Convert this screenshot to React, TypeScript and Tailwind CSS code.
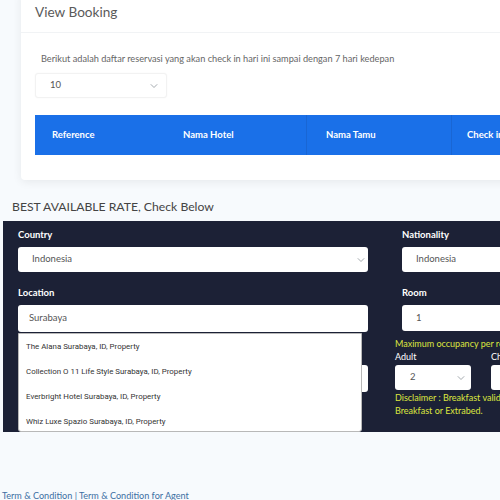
import React from "react";

function Chevron({ className = "" }: { className?: string }) {
  return (
    <svg width="8" height="5" viewBox="0 0 8 5" className={className} fill="none">
      <path d="M0.8 0.8 L4 4 L7.2 0.8" stroke="#9aa0a6" strokeWidth="0.9" />
    </svg>
  );
}

function Select({ value, className = "", pad = "pl-[14px]", chev = "right-[6px]" }: { value: string; className?: string; pad?: string; chev?: string }) {
  return (
    <div className={`relative flex items-center bg-white rounded-[3px] ${pad} ${className}`}>
      <span className="text-[9.5px] text-[#555]">{value}</span>
      <Chevron className={`absolute ${chev} top-1/2 -translate-y-1/2`} />
    </div>
  );
}

const hotels = [
  "The Alana Surabaya, ID, Property",
  "Collection O 11 Life Style Surabaya, ID, Property",
  "Everbright Hotel Surabaya, ID, Property",
  "Whiz Luxe Spazio Surabaya, ID, Property",
];

export default function App() {
  return (
    <div className="w-[500px] h-[500px] overflow-hidden bg-[#f7fafd] font-['Lato',sans-serif]">
      <div className="w-[720px]">
        {/* booking card */}
        <div className="ml-[21px] -mt-[10px] bg-white rounded-[4px] shadow-[0_2px_10px_rgba(0,0,0,0.07)]">
          <div className="h-[43px] flex items-center px-[14px] border-b border-[#f1f3f5]">
            <span className="text-[13.6px] text-[#5a5a5a] pt-[2px]">View Booking</span>
          </div>
          <div className="px-[14px] pt-[20px] pb-[25px]">
            <p className="ml-[6px] text-[9.2px] leading-[12px] text-[#666]">
              Berikut adalah daftar reservasi yang akan check in hari ini sampai dengan 7 hari kedepan
            </p>
            <div className="mt-[8px] w-[132px] h-[25px] relative flex items-center pl-[14px] bg-white rounded-[3px] border border-[#f2f2f2] shadow-[0_0_2px_rgba(0,0,0,0.04)]">
              <span className="text-[9.5px] text-[#555]">10</span>
              <Chevron className="absolute right-[8px] top-1/2 -translate-y-1/2" />
            </div>
            <div className="mt-[17px] h-[40px] bg-[#1a70e8] flex text-white font-bold text-[9.5px]">
              <div className="w-[128px] shrink-0 pl-[17px] flex items-center">Reference</div>
              <div className="w-[144px] shrink-0 pl-[20px] flex items-center border-r border-[#1966d4]">Nama Hotel</div>
              <div className="w-[145px] shrink-0 pl-[19px] flex items-center border-r border-[#1966d4]">Nama Tamu</div>
              <div className="w-[140px] shrink-0 pl-[15px] flex items-center">Check in</div>
            </div>
          </div>
        </div>

        {/* rate search */}
        <h2 className="mt-[19px] ml-[12px] text-[12.2px] leading-[16px] text-[#444]">BEST AVAILABLE RATE, Check Below</h2>
        <div className="mt-[6px] ml-[3px] h-[211px] bg-[#1c2136] flex pl-[15px]">
          {/* left column */}
          <div className="w-[350px] shrink-0 relative">
            <div className="pt-[8px] text-white font-bold text-[9.5px] leading-[12px]">Country</div>
            <Select value="Indonesia" className="mt-[6px] h-[25px]" chev="right-[3px]" />
            <div className="mt-[15px] text-white font-bold text-[9.5px] leading-[12px]">Location</div>
            <div className="mt-[6px] h-[27px] bg-white rounded-[3px] flex items-center pl-[11px]">
              <span className="text-[9.5px] text-[#555]">Surabaya</span>
            </div>
            <div className="mt-[33px] h-[27px] bg-white rounded-[3px]" />

            {/* autocomplete menu */}
            <div className="absolute left-0 top-[112px] w-[344px] h-[99px] bg-white border border-[#b8b8b8] rounded-b-[3px] font-['Roboto',sans-serif] text-[7.9px] text-[#333]">
              {hotels.map((h) => (
                <div key={h} className="h-[25px] flex items-center pl-[7px]">{h}</div>
              ))}
            </div>
          </div>

          {/* right column */}
          <div className="ml-[34px] w-[300px] shrink-0">
            <div className="pt-[8px] text-white font-bold text-[9.5px] leading-[12px]">Nationality</div>
            <Select value="Indonesia" className="mt-[6px] h-[25px]" />
            <div className="mt-[15px] text-white font-bold text-[9.5px] leading-[12px]">Room</div>
            <div className="mt-[6px] h-[26px] bg-white rounded-[3px] flex items-center pl-[14px]">
              <span className="text-[9.5px] text-[#555]">1</span>
            </div>
            <div className="-ml-[7px] mt-[6px]">
              <div className="text-[9px] leading-[13px] text-[#dde63f]">Maximum occupancy per room is 3 person</div>
              <div className="flex gap-[20px]">
                <div className="w-[76px]">
                  <div className="text-[9px] leading-[13px] text-white">Adult</div>
                  <Select value="2" className="mt-[2px] h-[25px]" pad="pl-[15px]" />
                </div>
                <div className="w-[76px]">
                  <div className="text-[9px] leading-[13px] text-white">Child</div>
                  <Select value="0" className="mt-[2px] h-[25px]" pad="pl-[15px]" />
                </div>
              </div>
              <div className="mt-[1px] text-[9px] leading-[13px] text-[#dde63f]">
                Disclaimer : Breakfast valid only for rooms with
                <br />
                Breakfast or Extrabed.
              </div>
            </div>
          </div>
        </div>

        <div className="mt-[58px] ml-[2px] text-[9.1px] leading-[12px] text-[#3d6fa3]">
          Term &amp; Condition | Term &amp; Condition for Agent
        </div>
      </div>
    </div>
  );
}
